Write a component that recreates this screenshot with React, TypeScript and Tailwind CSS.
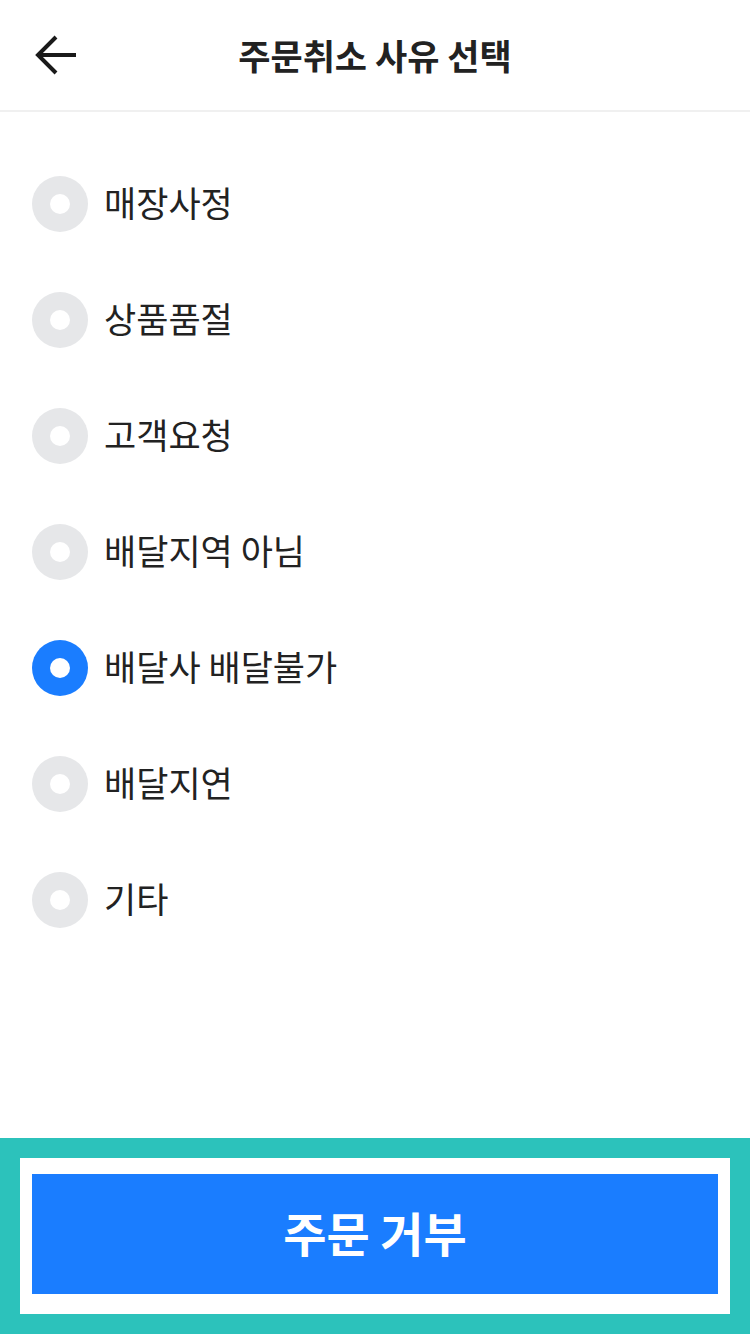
import { useState } from 'react'

const REASONS = ['매장사정', '상품품절', '고객요청', '배달지역 아님', '배달사 배달불가', '배달지연', '기타']

function BackArrow() {
  return (
    <svg width="44" height="44" viewBox="0 0 44 44" fill="none" stroke="#1a1a1a" strokeWidth="4" strokeLinecap="butt" strokeLinejoin="miter">
      <path d="M42 22H5" />
      <path d="M22 4L4 22l18 18" />
    </svg>
  )
}

function Radio({ checked }: { checked: boolean }) {
  return (
    <span
      className={
        checked
          ? 'flex h-[56px] w-[56px] shrink-0 items-center justify-center rounded-full bg-[#1a7dff]'
          : 'flex h-[56px] w-[56px] shrink-0 items-center justify-center rounded-full bg-[#e6e7e9]'
      }
    >
      <span className="h-[20px] w-[20px] rounded-full bg-white" />
    </span>
  )
}

export default function App() {
  const [selected, setSelected] = useState(4)

  return (
    <div
      className="flex h-[1334px] w-[750px] flex-col bg-white text-[#222]"
      style={{ fontFamily: '"Noto Sans CJK KR", "Noto Sans", sans-serif' }}
    >
      {/* header */}
      <header className="relative flex h-[112px] shrink-0 items-center justify-center border-b-2 border-[#f0f0f0]">
        <button className="absolute left-[34px] top-[33px]">
          <BackArrow />
        </button>
        <h1 className="pb-[2px] text-[35px] font-bold leading-none text-[#222]">주문취소 사유 선택</h1>
      </header>

      {/* reasons */}
      <ul className="flex-1 pt-[34px]">
        {REASONS.map((r, i) => (
          <li key={r}>
            <button
              className="flex h-[116px] w-full items-center gap-[16px] pl-[32px] text-left"
              onClick={() => setSelected(i)}
            >
              <Radio checked={selected === i} />
              <span className="pb-[6px] text-[35px] leading-none text-[#222]">{r}</span>
            </button>
          </li>
        ))}
      </ul>

      {/* footer */}
      <div className="h-[196px] shrink-0 bg-[#2cc2bb] p-[20px]">
        <div className="h-full bg-white px-[12px] pt-[16px] pb-[20px]">
          <button className="flex h-full w-full items-center justify-center bg-[#1a7dff] pb-[6px] text-[47px] font-bold leading-none text-white">
            주문 거부
          </button>
        </div>
      </div>
    </div>
  )
}
